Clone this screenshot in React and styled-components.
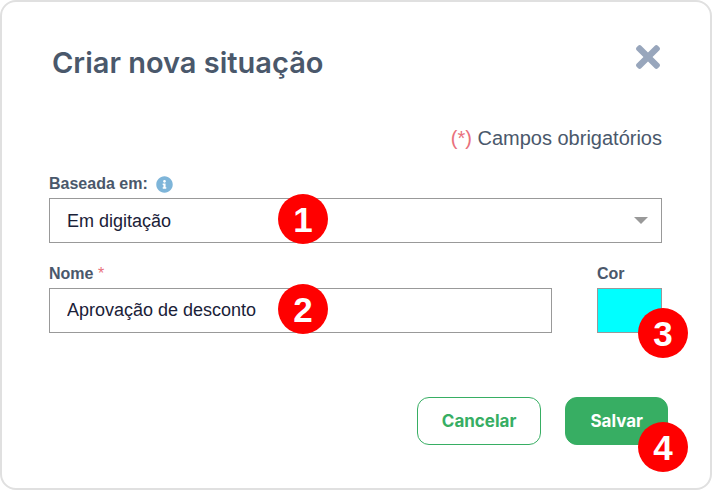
import React, { useState } from "react";
import styled, { createGlobalStyle } from "styled-components";
import { FaInfoCircle, FaTimes } from "react-icons/fa";

const color = {
  slate: "#4a586b",
  ink: "#1a2138",
  line: "#999999",
  frame: "#e0e0e0",
  green: "#37ae63",
  red: "#e9707c",
  marker: "#ff0000",
};

const GlobalStyle = createGlobalStyle`
  *, *::before, *::after { box-sizing: border-box; }
  body {
    margin: 0;
    background: #ffffff;
    color: ${color.slate};
    font-family: "Liberation Sans", Arial, sans-serif;
  }
`;

const Dialog = styled.form`
  min-height: 100vh;
  display: flex;
  flex-direction: column;
  padding: 36px 0;
  background: #ffffff;
  border: 2px solid ${color.frame};
  border-radius: 16px;
`;

const Header = styled.header`
  display: flex;
  align-items: flex-start;
  justify-content: space-between;
  padding: 0 50px;
`;

const Title = styled.h1`
  margin: 0;
  font-family: Inter, sans-serif;
  font-size: 29px;
  font-weight: 600;
  line-height: 50px;
`;

const CloseButton = styled.button`
  display: flex;
  padding: 0;
  border: 0;
  background: none;
  color: #98a6bc;
  cursor: pointer;

  svg {
    width: 24px;
    height: 38px;
  }
`;

const Body = styled.div`
  display: flex;
  flex-direction: column;
  padding: 38px 48px 64px 47px;
`;

const RequiredNote = styled.p`
  margin: 0 0 24px;
  text-align: right;
  font-size: 20px;
  line-height: 24px;
`;

const Required = styled.span`
  color: ${color.red};
  font-weight: 400;
`;

const Field = styled.div`
  display: flex;
  flex-direction: column;
  gap: 4px;
  flex: ${({ $width }) => ($width ? `0 0 ${$width}` : "1 1 auto")};
`;

const FieldRow = styled.div`
  display: flex;
  gap: 45px;
  margin-top: 21px;
`;

const LabelRow = styled.div`
  display: flex;
  align-items: center;
  gap: 8px;
  height: 20px;
`;

const Label = styled.label`
  font-size: 16px;
  font-weight: 700;
  line-height: 22px;
`;

const InfoIcon = styled(FaInfoCircle)`
  width: 17px;
  height: 17px;
  color: #7eb5d9;
`;

const Control = styled.div`
  position: relative;
  display: flex;
`;

const fieldBox = `
  width: 100%;
  height: 45px;
  margin: 0;
  border: 1px solid ${color.line};
  border-radius: 0;
  outline: none;
  appearance: none;
  background: #ffffff;
  color: ${color.ink};
  font-family: "Liberation Sans", Arial, sans-serif;
  font-size: 18px;
`;

const TextInput = styled.input`
  ${fieldBox}
  padding: 0 17px;
`;

const Select = styled.select`
  ${fieldBox}
  padding: 0 40px 0 17px;
`;

const Caret = styled.svg`
  position: absolute;
  top: 19px;
  right: 14px;
  width: 14px;
  height: 7px;
  fill: ${color.line};
  pointer-events: none;
`;

const ColorInput = styled.input`
  ${fieldBox}
  padding: 0;
  cursor: pointer;

  &::-webkit-color-swatch-wrapper { padding: 0; }
  &::-webkit-color-swatch { border: 0; border-radius: 0; }
`;

const Marker = styled.span`
  position: absolute;
  top: ${({ $top }) => $top};
  left: ${({ $left }) => $left};
  right: ${({ $right }) => $right};
  display: flex;
  align-items: center;
  justify-content: center;
  width: 50px;
  height: 50px;
  padding-top: 2px;
  border-radius: 50%;
  background: ${color.marker};
  color: #ffffff;
  font-size: 35px;
  font-weight: 700;
  line-height: 48px;
  pointer-events: none;
`;

const Footer = styled.footer`
  display: flex;
  justify-content: flex-end;
  gap: 24px;
  padding: 0 42px;
`;

const Button = styled.button`
  height: 48px;
  padding: 0 24px;
  border: 1px solid ${color.green};
  border-radius: 12px;
  background: ${({ $primary }) => ($primary ? color.green : "#ffffff")};
  color: ${({ $primary }) => ($primary ? "#ffffff" : color.green)};
  font-family: Inter, sans-serif;
  font-size: 17px;
  font-weight: 700;
  cursor: pointer;
`;

export default function App() {
  const [name, setName] = useState("Aprovação de desconto");
  const [swatch, setSwatch] = useState("#00ffff");

  return (
    <>
      <GlobalStyle />
      <Dialog role="dialog" aria-labelledby="title" onSubmit={(e) => e.preventDefault()}>
        <Header>
          <Title id="title">Criar nova situação</Title>
          <CloseButton type="button" aria-label="Fechar">
            <FaTimes />
          </CloseButton>
        </Header>
        <Body>
          <RequiredNote>
            <Required>(*)</Required> Campos obrigatórios
          </RequiredNote>
          <Field>
            <LabelRow>
              <Label htmlFor="base">Baseada em:</Label>
              <InfoIcon aria-hidden="true" />
            </LabelRow>
            <Control>
              <Select id="base" defaultValue="digitacao">
                <option value="digitacao">Em digitação</option>
              </Select>
              <Caret viewBox="0 0 14 7" aria-hidden="true">
                <path d="M0 0H14L7 7Z" />
              </Caret>
              <Marker $top="-4px" $left="229px">1</Marker>
            </Control>
          </Field>
          <FieldRow>
            <Field>
              <LabelRow>
                <Label htmlFor="name">
                  Nome <Required>*</Required>
                </Label>
              </LabelRow>
              <Control>
                <TextInput
                  id="name"
                  type="text"
                  required
                  value={name}
                  onChange={(e) => setName(e.target.value)}
                />
                <Marker $top="-4px" $left="229px">2</Marker>
              </Control>
            </Field>
            <Field $width="65px">
              <LabelRow>
                <Label htmlFor="color">Cor</Label>
              </LabelRow>
              <Control>
                <ColorInput
                  id="color"
                  type="color"
                  value={swatch}
                  onChange={(e) => setSwatch(e.target.value)}
                />
                <Marker $top="20px" $right="-26px">3</Marker>
              </Control>
            </Field>
          </FieldRow>
        </Body>
        <Footer>
          <Button type="button">Cancelar</Button>
          <Control>
            <Button type="submit" $primary>Salvar</Button>
            <Marker $top="25px" $right="-20px">4</Marker>
          </Control>
        </Footer>
      </Dialog>
    </>
  );
}
